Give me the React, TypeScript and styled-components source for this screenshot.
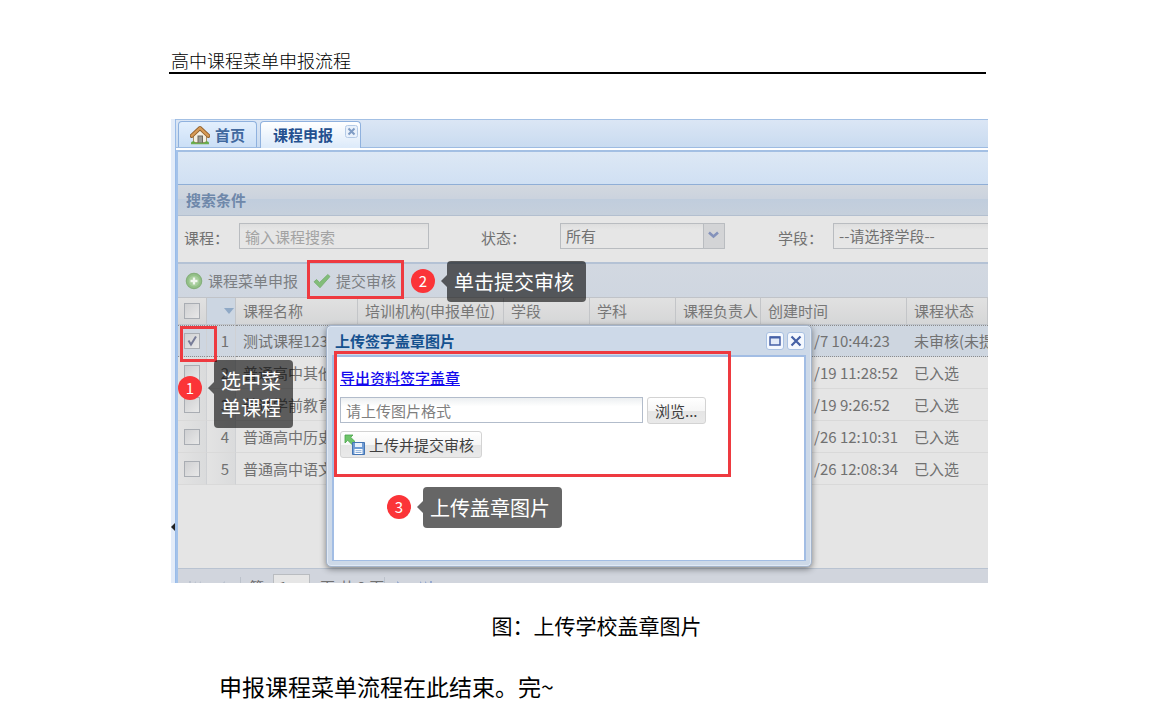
import React from "react";
import styled, { createGlobalStyle, css } from "styled-components";

const GlobalStyle = createGlobalStyle`
  *, *::before, *::after { box-sizing: border-box; }
  body { margin: 0; background: #fff; }
  body, button, input, select { font-family: "Noto Sans CJK SC", "Noto Sans", sans-serif; }
`;

const Page = styled.div`
  padding: 48px 166px 0 169px;
  color: #000;
`;

const DocHeader = styled.header`
  margin-right: 2px;
  height: 26px;
  border-bottom: 2px solid #000;
  padding-left: 2px;
  font-size: 18px;
  font-weight: 300;
  line-height: 24px;
`;

const Figure = styled.figure`
  margin: 45px 0 0 2px;
`;

const Shot = styled.div`
  position: relative;
  display: flex;
  height: 464px;
  overflow: hidden;
  font-size: 15px;
  color: #717171;
  white-space: nowrap;
`;

const Caption = styled.figcaption`
  margin-top: 26px;
  padding-left: 34px;
  text-align: center;
  font-size: 21px;
  line-height: 32px;
`;

const Closing = styled.p`
  margin: 28px 0 0;
  padding-left: 50px;
  font-size: 23px;
  line-height: 34px;
`;

const Splitter = styled.div`
  flex: none;
  display: flex;
  align-items: flex-end;
  width: 4px;
  padding-bottom: 49px;
  background: #e3ecf9;
`;

const Main = styled.div`
  flex: 1;
  min-width: 0;
  display: flex;
  flex-direction: column;
  border-left: 1px solid #99bbe8;
`;

const TabStrip = styled.nav`
  flex: none;
  display: flex;
  gap: 3px;
  height: 29px;
  padding: 1px 2px 0;
  border-top: 1px solid #a3c0e4;
  border-bottom: 1px solid #9dbbe2;
  background: linear-gradient(#dbe6f5, #c9dbf0);
`;

const Tab = styled.button<{ $active?: boolean }>`
  display: flex;
  align-items: center;
  gap: 5px;
  height: ${(p) => (p.$active ? 27 : 26)}px;
  padding: 0 ${(p) => (p.$active ? 2 : 11)}px 0 ${(p) => (p.$active ? 12 : 11)}px;
  border: 1px solid #8fb1de;
  border-bottom: 0;
  border-radius: 4px 4px 0 0;
  background: ${(p) => (p.$active ? "linear-gradient(#ffffff, #dceafa)" : "linear-gradient(#e3effd, #cbdff6)")};
  color: ${(p) => (p.$active ? "#24508f" : "#41699f")};
  font-size: 15px;
  font-weight: 700;
  line-height: 24px;
`;

const CloseMark = styled.svg`
  align-self: flex-start;
  margin: 3px 0 0 7px;
`;

const Content = styled.div`
  flex: 1;
  min-height: 0;
  display: flex;
  flex-direction: column;
  margin-top: 2px;
  border-left: 2px solid #a3c2ea;
`;

const TopBar = styled.div`
  flex: none;
  height: 34px;
  border-top: 2px solid #a3bfe3;
  background: linear-gradient(#dde8f5, #d0e0f3);
`;

const SearchTitle = styled.h2`
  flex: none;
  margin: 0;
  height: 32px;
  padding-left: 8px;
  border-top: 1px solid #8faed6;
  border-bottom: 1px solid #b3bfcf;
  background: linear-gradient(#d3d8df, #cbd3de 45%, #c0cddd 46%, #c6d0dc);
  color: #6f88aa;
  font-size: 15px;
  font-weight: 700;
  line-height: 30px;
`;

const SearchForm = styled.form`
  flex: none;
  display: flex;
  align-items: center;
  height: 46px;
  padding: 0 0 6px 6px;
  background: #e6e6e6;
`;

const FieldLabel = styled.label<{ $width: number }>`
  flex: none;
  width: ${(p) => p.$width}px;
  margin-top: 4px;
  line-height: 24px;
`;

const fieldFace = css`
  height: 26px;
  border: 1px solid #b9bcc0;
  border-radius: 0;
  padding: 0 5px;
  font-size: 15px;
  line-height: 24px;
  outline: 0;
`;

const SearchInput = styled.input`
  ${fieldFace}
  flex: none;
  width: 190px;
  margin-right: 52px;
  background: linear-gradient(#dedede, #e6e6e6 25%);
  color: #777;
  &::placeholder { color: #a3a3a3; opacity: 1; }
`;

const SelectBox = styled.div<{ $width: number }>`
  flex: none;
  display: grid;
  grid-template-columns: 1fr 22px;
  width: ${(p) => p.$width}px;
  margin-right: 53px;
`;

const Select = styled.select`
  ${fieldFace}
  appearance: none;
  grid-area: 1 / 1 / 2 / 3;
  background: linear-gradient(#dedede, #e6e6e6 25%);
  color: #717171;
`;

const Trigger = styled.svg`
  grid-area: 1 / 2 / 2 / 3;
  pointer-events: none;
`;

const Toolbar = styled.div`
  flex: none;
  display: flex;
  align-items: center;
  gap: 15px;
  height: 35px;
  padding: 0 7px;
  border-top: 2px solid #b4c2d5;
  background: linear-gradient(#d2d8e1, #cfd6e0);
`;

const ToolButton = styled.button`
  display: flex;
  align-items: center;
  gap: 5px;
  padding: 0;
  border: 0;
  background: none;
  color: #7c7f83;
  font-size: 15px;
  line-height: 24px;
`;

const GridArea = styled.div`
  flex: none;
  height: 271px;
  overflow: hidden;
  background: #e5e5e5;
`;

const Grid = styled.table`
  width: 100%;
  table-layout: fixed;
  border-collapse: separate;
  border-spacing: 0;
  line-height: 24px;
`;

const Th = styled.th`
  height: 28px;
  padding: 0 0 1px 7px;
  overflow: hidden;
  border-top: 1px solid #c0c3c8;
  border-right: 1px solid #c3c5c8;
  border-bottom: 1px solid #c0c4ca;
  background: linear-gradient(#e1e1e1, #d5d6d7);
  color: #777;
  font-weight: 400;
  text-align: left;
`;

const SortTh = styled(Th)`
  background: #ccd6e2;
  text-align: right;
  padding-right: 1px;
  svg { display: block; margin-left: auto; }
`;

const Td = styled.td`
  height: 32px;
  padding: 0 0 0 7px;
  overflow: hidden;
  border-bottom: 1px solid #d9d9d9;
`;

const SideTd = styled(Td)`
  border-right: 1px solid #cfd1d4;
  background: linear-gradient(90deg, #e3e3e3, #dadbdc);
`;

const NumTd = styled(SideTd)`
  padding: 0 6px 0 0;
  text-align: right;
`;

const Row = styled.tr<{ $selected?: boolean }>`
  ${(p) =>
    p.$selected &&
    css`
      & > td {
        border-top: 1px dotted #8c8c8c;
        border-bottom: 1px dotted #8c8c8c;
        background: #ced6e0;
      }
    `}
`;

const Check = styled.input`
  appearance: none;
  display: block;
  width: 16px;
  height: 16px;
  margin: 0 0 0 -1px;
  border: 1px solid #a9adb3;
  background: linear-gradient(135deg, #cfd0d2, #e8e8e8);
  &:checked {
    background: linear-gradient(135deg, #d0d1d3, #e8e8e8);
  }
`;

const CheckCell = styled.label`
  display: grid;
  width: 16px;
  & > * { grid-area: 1 / 1; }
`;

const Pager = styled.div`
  flex: none;
  display: flex;
  align-items: center;
  height: 36px;
  padding-left: 10px;
  border-top: 1px solid #b9c3d1;
  background: #d1d5dd;
`;

const PagerIcon = styled.svg`
  flex: none;
  margin-right: 12px;
`;

const PagerRule = styled.span`
  width: 1px;
  height: 20px;
  margin: 0 8px 0 0;
  background: #bcc2cb;
`;

const PageInput = styled.input`
  ${fieldFace}
  width: 37px;
  margin: 0 10px 0 9px;
  background: #e6e6e6;
  color: #717171;
`;

const Dialog = styled.section`
  position: absolute;
  left: 155px;
  top: 206px;
  display: flex;
  flex-direction: column;
  width: 486px;
  height: 242px;
  padding: 0 5px 5px;
  border: 1px solid #a4b4ca;
  border-radius: 5px;
  background: #cdd9e8;
  box-shadow: inset 0 0 0 1px #e0e9f5, 0 2px 6px rgba(0, 0, 0, 0.45);
  color: #444;
`;

const DialogHead = styled.header`
  display: flex;
  align-items: center;
  gap: 3px;
  height: 29px;
  padding: 0 1px 0 3px;
`;

const DialogTitle = styled.h3`
  flex: 1;
  margin: 0;
  color: #15518f;
  font-size: 15px;
  font-weight: 700;
  line-height: 24px;
`;

const HeadButton = styled.button`
  display: grid;
  place-items: center;
  width: 18px;
  height: 18px;
  padding: 0;
  border: 1px solid #a9c1e2;
  border-radius: 3px;
  background: #f4f8fe;
`;

const DialogBody = styled.div`
  flex: 1;
  display: flex;
  flex-direction: column;
  align-items: flex-start;
  gap: 7px;
  padding: 9px 6px;
  border: 2px solid #a2bde4;
  border-bottom-width: 1px;
  background: #fff;
`;

const ExportLink = styled.a`
  color: #1208ee;
  line-height: 24px;
  text-decoration: underline;
  font-weight: 500;
`;

const UploadRow = styled.div`
  display: flex;
  gap: 4px;
`;

const PathInput = styled.input`
  ${fieldFace}
  width: 303px;
  border-color: #b2bccb;
  background: linear-gradient(#eceff1, #fff 35%);
  color: #777;
  &::placeholder { color: #7f7f7f; opacity: 1; }
`;

const PushButton = styled.button`
  display: flex;
  align-items: center;
  gap: 3px;
  height: 27px;
  padding: 0 7px 0 3px;
  border: 1px solid #d3d3d3;
  border-radius: 3px;
  background: linear-gradient(#fff, #f6f6f6 50%, #e5e5e5 51%, #e9e9e9);
  color: #3f3f3f;
  font-size: 15px;
  line-height: 24px;
`;

const BrowseButton = styled(PushButton)`
  padding: 0 7px;
`;

const Marked = styled.div<{ $x: number; $y: number; $w: number; $h: number }>`
  position: absolute;
  left: ${(p) => p.$x}px;
  top: ${(p) => p.$y}px;
  width: ${(p) => p.$w}px;
  height: ${(p) => p.$h}px;
  border: 3px solid #ee3a40;
  pointer-events: none;
`;

const Step = styled.div<{ $x: number; $y: number }>`
  position: absolute;
  left: ${(p) => p.$x}px;
  top: ${(p) => p.$y}px;
  display: flex;
  align-items: flex-start;
`;

const StepNumber = styled.span<{ $drop: number }>`
  width: 24px;
  height: 24px;
  margin-top: ${(p) => p.$drop}px;
  border-radius: 50%;
  background: #fb3438;
  color: #fff;
  font-size: 15px;
  line-height: 24px;
  text-align: center;
`;

const StepArrow = styled.span<{ $drop: number }>`
  width: 6px;
  margin: ${(p) => p.$drop + 6}px 0 0 6px;
  border: 6px solid transparent;
  border-width: 6px 6px 6px 0;
  border-right-color: rgba(0, 0, 0, 0.6);
`;

const StepText = styled.span`
  padding: 7px 12px 7px 7px;
  border-radius: 4px;
  background: rgba(0, 0, 0, 0.6);
  color: #fff;
  font-size: 20px;
  line-height: 27px;
`;

const HouseIcon = () => (
  <svg width="20" height="20" viewBox="0 0 20 20" aria-hidden="true">
    <path d="M3.5 10 10 4l6.500 6v7.500h-13z" fill="#f4efe2" stroke="#a98d62" strokeWidth="1" />
    <path d="M1.500 11 10 3l8.500 8" fill="none" stroke="#8f5f2c" strokeWidth="4" strokeLinejoin="round" strokeLinecap="round" />
    <path d="M1.700 10.800 10 3l8.300 7.800" fill="none" stroke="#d79a55" strokeWidth="2.400" strokeLinejoin="round" strokeLinecap="round" />
    <rect x="8" y="11" width="4.500" height="7" fill="#9b9b95" stroke="#6c675d" />
    <path d="M1 18.500c0-3 4.500-3 4.500 0zM14.500 18.500c0-3 4.500-3 4.500 0z" fill="#5fa945" />
    <path d="M1 18.500h18" stroke="#6fae52" strokeWidth="1.500" />
  </svg>
);

const AddIcon = () => (
  <svg width="18" height="18" viewBox="0 0 18 18" aria-hidden="true">
    <circle cx="9" cy="9" r="7.700" fill="#94c188" stroke="#86b07c" strokeWidth="1.200" />
    <circle cx="9" cy="9" r="5.300" fill="#a6cd9b" />
    <path d="M9 5.500v7M5.500 9h7" stroke="#f1f6ef" strokeWidth="2.400" />
  </svg>
);

const TickIcon = () => (
  <svg width="18" height="18" viewBox="0 0 18 18" aria-hidden="true">
    <path d="M1 9.800 3.600 7.500l3 3L14.800 2.500l2.200 2L7 15.800z" fill="#82bd79" stroke="#74ac6d" strokeWidth="0.800" strokeLinejoin="round" />
  </svg>
);

const UploadIcon = () => (
  <svg width="22" height="22" viewBox="0 0 22 22" aria-hidden="true">
    <path d="M1 1h8L6.700 3.300 11 7.600 8 10.500 3.700 6.300 1 9z" fill="#6fc56a" stroke="#4aa24b" strokeWidth="0.800" />
    <path d="M8.500 8.500h12v12h-12z" fill="#6f9bd3" stroke="#4475b4" />
    <path d="M11 9h7v4h-7z" fill="#e9f1fb" />
    <path d="M10.500 15h8v5h-8z" fill="#fff" />
    <path d="M11.500 16.700h6M11.500 18.500h6" stroke="#7ea5d6" strokeWidth="0.900" />
  </svg>
);

const Checkbox = ({ label, checked }: { label: string; checked?: boolean }) => (
  <CheckCell>
    <Check type="checkbox" aria-label={label} defaultChecked={checked} />
    {checked && (
      <svg width="14" height="16" viewBox="0 0 14 16" aria-hidden="true">
        <path d="M3.500 7.500 6 11.500 11 3.500" fill="none" stroke="#777c98" strokeWidth="2" />
      </svg>
    )}
  </CheckCell>
);

const DropArrow = () => (
  <Trigger width="22" height="26" viewBox="0 0 22 26" aria-hidden="true">
    <path d="M.5.5h21v25H.5z" fill="#d3d4d6" stroke="#b9bcc0" />
    <path d="M6 9.500l4.500 4L15 9.500" fill="none" stroke="#8492bb" strokeWidth="2.600" />
  </Trigger>
);

const columns = [
  { title: "课程名称", width: 122 },
  { title: "培训机构(申报单位)", width: 146 },
  { title: "学段", width: 86 },
  { title: "学科", width: 86 },
  { title: "课程负责人", width: 85 },
  { title: "创建时间", width: 146 },
];

const rows = [
  { name: "测试课程123", time: "/7 10:44:23", status: "未审核(未提交)", selected: true },
  { name: "普通高中其他", time: "/19 11:28:52", status: "已入选" },
  { name: "普通学前教育", time: "/19 9:26:52", status: "已入选" },
  { name: "普通高中历史", time: "/26 12:10:31", status: "已入选" },
  { name: "普通高中语文", time: "/26 12:08:34", status: "已入选" },
];

const TimeTd = styled(Td)`
  padding-left: 53px;
`;

const CourseGrid = () => (
  <Grid>
    <colgroup>
      <col style={{ width: 29 }} />
      <col style={{ width: 29 }} />
      {columns.map((c) => (
        <col key={c.title} style={{ width: c.width }} />
      ))}
      <col />
    </colgroup>
    <thead>
      <tr>
        <Th><Checkbox label="全选" /></Th>
        <SortTh>
          <svg width="10" height="6" viewBox="0 0 10 6" aria-hidden="true">
            <path d="M0 0h10L5 6z" fill="#8fa9c6" />
          </svg>
        </SortTh>
        {columns.map((c) => (
          <Th key={c.title}>{c.title}</Th>
        ))}
        <Th>课程状态</Th>
      </tr>
    </thead>
    <tbody>
      {rows.map((r, i) => (
        <Row key={r.name} $selected={r.selected}>
          <SideTd><Checkbox label={r.name} checked={r.selected} /></SideTd>
          <NumTd>{i + 1}</NumTd>
          <Td>{r.name}</Td>
          <Td />
          <Td />
          <Td />
          <Td />
          <TimeTd>{r.time}</TimeTd>
          <Td>{r.status}</Td>
        </Row>
      ))}
    </tbody>
  </Grid>
);

const UploadDialog = () => (
  <Dialog role="dialog" aria-labelledby="dialog-title">
    <DialogHead>
      <DialogTitle id="dialog-title">上传签字盖章图片</DialogTitle>
      <HeadButton type="button" aria-label="最大化">
        <svg width="12" height="10" viewBox="0 0 12 10" aria-hidden="true">
          <path d="M1 1h10v8H1z" fill="#e3ebf8" stroke="#4560a6" strokeWidth="1.500" />
          <path d="M1 1.500h10" stroke="#4560a6" strokeWidth="2" />
        </svg>
      </HeadButton>
      <HeadButton type="button" aria-label="关闭">
        <svg width="12" height="12" viewBox="0 0 12 12" aria-hidden="true">
          <path d="M1.500 1.500l9 9M10.500 1.500l-9 9" stroke="#4560a6" strokeWidth="2.200" />
        </svg>
      </HeadButton>
    </DialogHead>
    <DialogBody>
      <ExportLink href="#export">导出资料签字盖章</ExportLink>
      <UploadRow>
        <PathInput aria-label="图片路径" placeholder="请上传图片格式" />
        <BrowseButton type="button">浏览...</BrowseButton>
      </UploadRow>
      <PushButton type="button"><UploadIcon />上传并提交审核</PushButton>
    </DialogBody>
  </Dialog>
);

interface CalloutProps { x: number; y: number; n: number; drop: number; children: React.ReactNode }

const Callout = ({ x, y, n, drop, children }: CalloutProps) => (
  <Step $x={x} $y={y}>
    <StepNumber $drop={drop}>{n}</StepNumber>
    <StepArrow $drop={drop} />
    <StepText>{children}</StepText>
  </Step>
);

export default function App() {
  return (
    <Page>
      <GlobalStyle />
      <DocHeader>高中课程菜单申报流程</DocHeader>
      <Figure>
        <Shot>
          <Splitter>
            <svg width="4" height="14" viewBox="0 0 4 14" aria-hidden="true">
              <path d="M4 3v8L0 7z" fill="#222" />
            </svg>
          </Splitter>
          <Main>
            <TabStrip>
              <Tab type="button"><HouseIcon />首页</Tab>
              <Tab type="button" $active>
                课程申报
                <CloseMark width="13" height="13" viewBox="0 0 13 13" aria-hidden="true">
                  <rect x=".5" y=".5" width="12" height="12" rx="2" fill="#e9f1fb" stroke="#b4cae6" />
                  <path d="M3.500 3.500l6 6M9.500 3.500l-6 6" stroke="#7f9cc4" strokeWidth="2" />
                </CloseMark>
              </Tab>
            </TabStrip>
            <Content>
              <TopBar />
              <SearchTitle>搜索条件</SearchTitle>
              <SearchForm>
                <FieldLabel $width={55} htmlFor="course">课程：</FieldLabel>
                <SearchInput id="course" placeholder="输入课程搜索" />
                <FieldLabel $width={79} htmlFor="state">状态：</FieldLabel>
                <SelectBox $width={165}>
                  <Select id="state"><option>所有</option></Select>
                  <DropArrow />
                </SelectBox>
                <FieldLabel $width={55} htmlFor="stage">学段：</FieldLabel>
                <SelectBox $width={190}>
                  <Select id="stage"><option>--请选择学段--</option></Select>
                  <DropArrow />
                </SelectBox>
              </SearchForm>
              <Toolbar>
                <ToolButton type="button"><AddIcon />课程菜单申报</ToolButton>
                <ToolButton type="button"><TickIcon />提交审核</ToolButton>
              </Toolbar>
              <GridArea><CourseGrid /></GridArea>
              <Pager>
                <PagerIcon width="14" height="16" viewBox="0 0 14 16" aria-hidden="true">
                  <path d="M1 2h2v12H1zM8 2v12L3 8zM13 2v12L8 8z" fill="#bcc3cf" />
                </PagerIcon>
                <PagerIcon width="14" height="16" viewBox="0 0 14 16" aria-hidden="true">
                  <path d="M11 2v12L4 8z" fill="#bcc3cf" />
                </PagerIcon>
                <PagerRule />
                <label htmlFor="page">第</label>
                <PageInput id="page" defaultValue="1" />
                <span>页,共 2 页</span>
                <PagerRule style={undefined} />
                <PagerIcon width="14" height="16" viewBox="0 0 14 16" aria-hidden="true">
                  <path d="M4 2v12l7-6z" fill="#96a9cf" />
                </PagerIcon>
                <PagerIcon width="14" height="16" viewBox="0 0 14 16" aria-hidden="true">
                  <path d="M1 2v12l5-6zM6 2v12l5-6zM11 2h2v12h-2z" fill="#96a9cf" />
                </PagerIcon>
              </Pager>
            </Content>
          </Main>
          <UploadDialog />
          <Marked $x={136} $y={141} $w={97} $h={39} />
          <Marked $x={9} $y={207} $w={37} $h={36} />
          <Marked $x={163} $y={232} $w={397} $h={126} />
          <Callout x={7} y={241} n={1} drop={16}>选中菜<br />单课程</Callout>
          <Callout x={240} y={142} n={2} drop={8}>单击提交审核</Callout>
          <Callout x={216} y={368} n={3} drop={8}>上传盖章图片</Callout>
        </Shot>
        <Caption>图：上传学校盖章图片</Caption>
      </Figure>
      <Closing>申报课程菜单流程在此结束。完~</Closing>
    </Page>
  );
}
